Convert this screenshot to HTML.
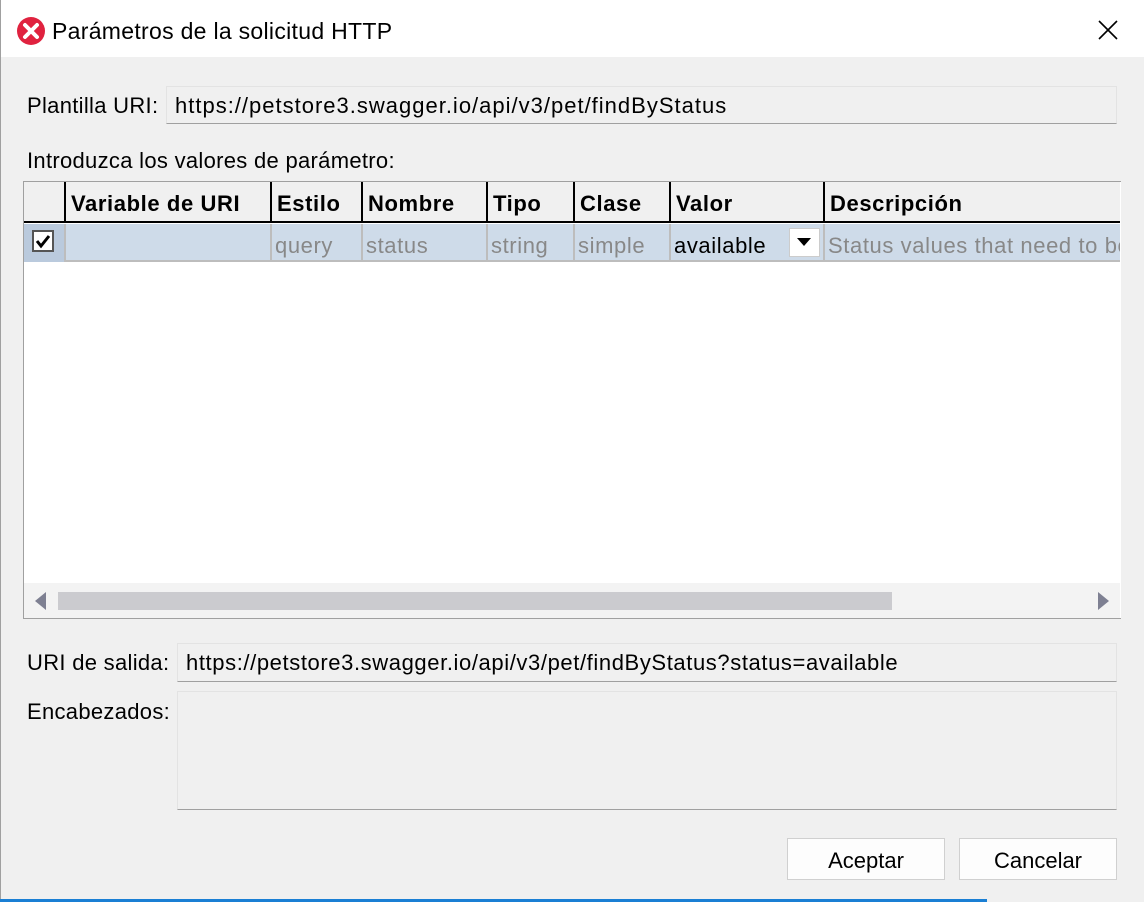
<!DOCTYPE html>
<html><head><meta charset="utf-8"><style>
*{box-sizing:border-box;margin:0;padding:0}
body{width:1144px;height:902px;background:#f0f0f0;font-family:"Liberation Sans",sans-serif;font-size:22px;color:#000;position:relative;overflow:hidden}
.a{position:absolute;white-space:nowrap}
.field{position:absolute;background:#f0f0f0;border:1px solid #e3e3e3;border-bottom:1px solid #a0a0a0}
.hd{position:absolute;top:182px;height:41px;border-right:2px solid #000;border-bottom:2px solid #000;font-weight:bold;padding:9px 0 0 5px;background:#f0f0f0;letter-spacing:0.6px}
.cl{position:absolute;top:224px;height:38px;border-right:2px solid #bdbdbd;color:#888;padding:9px 0 0 3px;white-space:nowrap;overflow:hidden;letter-spacing:0.6px}
.btn{position:absolute;top:838px;height:42px;width:158px;background:#fdfdfd;border:1px solid #d0d0d0;text-align:center;line-height:44px}
.u{letter-spacing:1px}
</style></head><body>
<div class="a" style="left:0;top:0;width:1144px;height:57px;background:#fff"></div>
<div class="a" style="left:0;top:0;width:1px;height:902px;background:#a0a0a0"></div>
<svg class="a" style="left:16px;top:16px" width="30" height="30" viewBox="0 0 30 30"><circle cx="15" cy="15" r="14" fill="#e0223f"/><path d="M9 9 L21 21 M21 9 L9 21" stroke="#fff" stroke-width="4" stroke-linecap="round"/></svg>
<div class="a" style="left:52px;top:18px;font-size:23px;letter-spacing:0.3px">Parámetros de la solicitud HTTP</div>
<svg class="a" style="left:1098px;top:20px" width="20" height="20"><path d="M1 1L19 19M19 1L1 19" stroke="#000" stroke-width="1.6"/></svg>

<div class="a" style="left:27px;top:93px;letter-spacing:0.3px">Plantilla URI:</div>
<div class="field" style="left:166px;top:86px;width:951px;height:38px"></div>
<div class="a u" style="left:175px;top:93px">https://petstore3.swagger.io/api/v3/pet/findByStatus</div>
<div class="a" style="left:27px;top:148px;letter-spacing:0.3px">Introduzca los valores de parámetro:</div>

<div class="a" style="left:23px;top:181px;width:1098px;height:438px;background:#fff;border:1px solid #a0a0a0;border-right:none;overflow:hidden">
</div>
<div class="hd" style="left:24px;width:42px"></div>
<div class="hd" style="left:66px;width:206px">Variable de URI</div>
<div class="hd" style="left:272px;width:91px">Estilo</div>
<div class="hd" style="left:363px;width:125px">Nombre</div>
<div class="hd" style="left:488px;width:87px">Tipo</div>
<div class="hd" style="left:575px;width:96px">Clase</div>
<div class="hd" style="left:671px;width:154px">Valor</div>
<div class="hd" style="left:825px;width:295px;border-right:none">Descripción</div>
<div class="a" style="left:24px;top:224px;width:1096px;height:38px;background:#cedbe9;border-bottom:2px solid #bdbdbd"></div>
<div class="cl" style="left:24px;width:42px;background:#bacadd"></div>
<div class="a" style="left:32px;top:230px;width:22px;height:22px;background:#fff;border:2px solid #555"></div>
<svg class="a" style="left:35px;top:233px" width="16" height="16"><path d="M2 8L6 13L14 3" stroke="#000" stroke-width="3" fill="none"/></svg>
<div class="cl" style="left:66px;width:206px"></div>
<div class="cl" style="left:272px;width:91px">query</div>
<div class="cl" style="left:363px;width:125px">status</div>
<div class="cl" style="left:488px;width:87px">string</div>
<div class="cl" style="left:575px;width:96px">simple</div>
<div class="cl" style="left:671px;width:154px;color:#000">available</div>
<div class="a" style="left:789px;top:228px;width:31px;height:29px;background:#fff;border:1px solid #ccc"></div>
<svg class="a" style="left:797px;top:238px" width="14" height="9"><path d="M0 0H14L7 8Z" fill="#000"/></svg>
<div class="cl" style="left:825px;width:295px;border-right:none">Status values that need to be</div>
<div class="a" style="left:24px;top:583px;width:1096px;height:35px;background:#f3f3f3"></div>
<div class="a" style="left:58px;top:592px;width:834px;height:18px;background:#cbcbcf"></div>
<svg class="a" style="left:35px;top:592px" width="12" height="18"><path d="M11 0V18L0 9Z" fill="#7e8092"/></svg>
<svg class="a" style="left:1097px;top:592px" width="12" height="18"><path d="M1 0V18L12 9Z" fill="#7e8092"/></svg>

<div class="a" style="left:27px;top:650px;letter-spacing:0.3px">URI de salida:</div>
<div class="field" style="left:177px;top:643px;width:940px;height:39px"></div>
<div class="a" style="left:186px;top:650px;letter-spacing:0.6px">https://petstore3.swagger.io/api/v3/pet/findByStatus?status=available</div>
<div class="a" style="left:27px;top:699px;letter-spacing:0.3px">Encabezados:</div>
<div class="field" style="left:177px;top:691px;width:940px;height:119px"></div>

<div class="btn" style="left:787px">Aceptar</div>
<div class="btn" style="left:959px">Cancelar</div>
<div class="a" style="left:0;top:899px;width:987px;height:3px;background:#1a7fd4"></div>
</body></html>
